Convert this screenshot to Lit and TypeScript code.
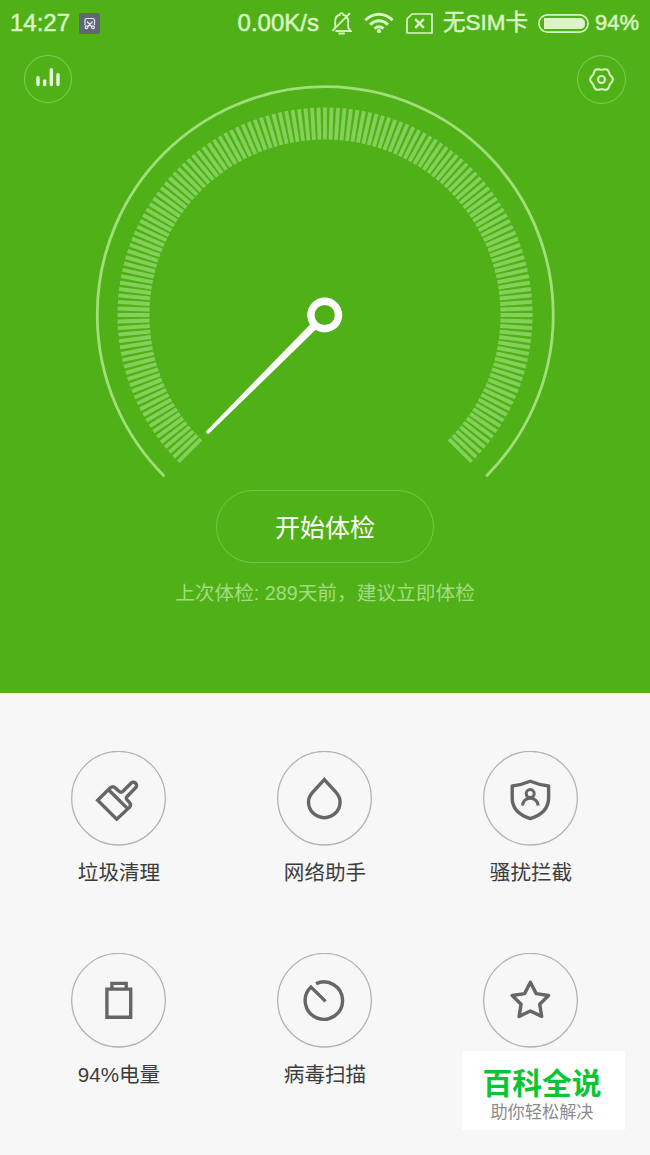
import { LitElement, html, css, svg } from "lit";
import { customElement } from "lit/decorators.js";

const CX = 235;
const CY = 235;

// 151 graduation marks, one every 1.8 degrees over a 270 degree sweep
const ticks = Array.from({ length: 151 }, (_, i) => {
  const a = ((-225 + i * 1.8) * Math.PI) / 180;
  const c = Math.cos(a);
  const s = Math.sin(a);
  const f = (n: number) => n.toFixed(2);
  return `M${f(CX + 175.5 * c)} ${f(CY + 175.5 * s)}L${f(CX + 207.5 * c)} ${f(CY + 207.5 * s)}`;
}).join("");

const gearPath =
  Array.from({ length: 72 }, (_, i) => {
    const a = (i * 5 * Math.PI) / 180;
    const r = 10.5 + 0.8 * Math.cos(6 * a);
    return `${i ? "L" : "M"}${(24.5 + r * Math.cos(a)).toFixed(2)} ${(24.5 + r * Math.sin(a)).toFixed(2)}`;
  }).join("") + "Z";

const tools = [
  {
    label: "垃圾清理",
    icon: svg`<path d="M26.7 49.3 39 37Q41.8 34.6 44.4 37L48 40.3Q50 42 52 40.2L60 32.2A3.2 3.2 0 0 1 64.6 36.8L56.3 45.2Q54.4 47.2 56.3 49.2L58.6 51.6Q60.6 54.2 58.4 56.4L45.7 68.2ZM37.5 38.8 56.6 57.6"/>`,
  },
  {
    label: "网络助手",
    icon: svg`<path d="M47.3 28.6 36 40.9C33 44.1 31.5 47.3 31.5 50.9A15.8 15.8 0 0 0 63.1 50.9C63.1 47.3 61.6 44.1 58.6 40.9Z"/>`,
  },
  {
    label: "骚扰拦截",
    icon: svg`<path stroke-linejoin="round" d="M47.3 30.2Q38 34 29.2 35V47C29.2 57 36 64 47.3 67.6C58.6 64 65.6 57 65.6 47V35Q56.6 34 47.3 30.2Z"/><g stroke-width="3"><circle cx="47.2" cy="42.6" r="4"/><path d="M39.4 54.6C40.2 49.6 43.2 47.2 47.2 47.2S54.4 49.6 55.2 54.6"/></g>`,
  },
  {
    label: "94%电量",
    icon: svg`<path d="M35.9 36.1H59.7V64.3H35.9ZM40.9 35V30.4H55.2V35"/>`,
  },
  {
    label: "病毒扫描",
    icon: svg`<path d="M39 30.6A18.7 18.7 0 1 1 34 34L48.6 48.4"/>`,
  },
  {
    label: "",
    icon: svg`<path stroke-linejoin="round" d="M47.4 29.3 53.2 40.6 65.6 42.5 56.7 51.3 58.7 63.4 47.4 58 36.1 63.4 38.1 51.3 29.2 42.5 41.6 40.6Z"/>`,
  },
];

@customElement("app-root")
export class AppRoot extends LitElement {
  static styles = css`
    :host {
      display: block;
      position: relative;
      width: 650px;
      height: 1155px;
      overflow: hidden;
      background: #f7f7f7;
      font-family: "Liberation Sans", "Noto Sans CJK SC", sans-serif;
    }
    svg {
      display: block;
      fill: none;
      flex: none;
    }
    .hero {
      height: 693px;
      background: #50b018;
      display: flex;
      flex-direction: column;
      align-items: center;
    }
    .status {
      width: 100%;
      height: 46px;
      box-sizing: border-box;
      padding: 0 11px 0 10px;
      display: flex;
      align-items: center;
      color: #d8f5c5;
      font-size: 24px;
      line-height: 48px;
      white-space: nowrap;
      -webkit-text-stroke: 0.5px #d8f5c5;
    }
    .badge {
      margin-left: 9px;
    }
    .speed {
      margin-left: auto;
    }
    .bell {
      margin-left: 12px;
    }
    .wifi {
      margin-left: 12px;
    }
    .sim {
      margin-left: 12px;
    }
    .carrier {
      margin-left: 10px;
      font-size: 22.5px;
    }
    .battery {
      margin: 0 6px 0 10px;
    }
    .percent {
      font-size: 22px;
    }
    .top {
      width: 100%;
      height: 444px;
      box-sizing: border-box;
      padding: 9px 24px 0;
      display: flex;
      justify-content: space-between;
    }
    .gauge {
      margin-top: 25px;
    }
    .start {
      box-sizing: border-box;
      width: 218px;
      height: 73px;
      border: 1.5px solid #74c946;
      border-radius: 37px;
      color: #fff;
      font-size: 25px;
      line-height: 74px;
      text-align: center;
    }
    .last {
      margin-top: 15px;
      color: #a3dc80;
      font-size: 19.7px;
      line-height: 30px;
      white-space: nowrap;
    }
    .tools {
      padding: 58px 0 0 15.5px;
      display: grid;
      grid-template-columns: repeat(3, 206px);
      grid-auto-rows: 202px;
    }
    .tool {
      display: flex;
      flex-direction: column;
      align-items: center;
      color: #3c3c3c;
      font-size: 20.6px;
      line-height: 30px;
    }
    .label {
      margin: 12px 0 0 1px;
    }
    .promo {
      position: absolute;
      left: 462px;
      top: 1051px;
      width: 163px;
      height: 79px;
      background: #fff;
      display: flex;
      flex-direction: column;
      align-items: center;
      white-space: nowrap;
    }
    .brand {
      margin: 15px 3px 0 0;
      color: #0bc634;
      font-size: 29.8px;
      font-weight: 700;
      line-height: 36px;
    }
    .slogan {
      margin: -1px 3px 0 0;
      color: #8c8c8c;
      font-size: 17.2px;
      line-height: 22px;
    }
  `;

  render() {
    return html`
      <div class="hero">
        <div class="status">
          <span>14:27</span>
          <svg class="badge" width="21" height="21" stroke="#e8e8f4" stroke-width="1.2">
            <rect width="21" height="21" rx="2.5" fill="#5d6874" stroke="none" />
            <path d="M6 12V7.5Q6 5.5 8 5.5H13.5Q15.5 5.5 15.5 7.5V12M8 8.5 13 14M13.5 8.5 8.5 14" />
            <circle cx="7.5" cy="14.3" r="1.4" />
            <circle cx="14" cy="14.3" r="1.4" />
          </svg>
          <span class="speed">0.00K/s</span>
          <svg class="bell" width="21" height="23" stroke="#d8f5c5" stroke-width="1.8">
            <path d="M4.2 16V9.5Q4.2 3.8 8.7 3Q9 1.2 10.5 1.2T12.5 3Q17.2 3.8 17.2 9.5V16L19.8 19H4.5M1.4 18.8 19 1.2M7.5 21.5H13.8" />
          </svg>
          <svg class="wifi" width="30" height="22" stroke="#d8f5c5" stroke-width="2.9">
            <path d="M1.3 8.2Q15-3.6 28.7 8.2M6 12.6Q15 5 24 12.6M10.5 16.6Q15 13 19.5 16.6" />
            <circle cx="15" cy="19.2" r="2.1" fill="#d8f5c5" stroke="none" />
          </svg>
          <svg class="sim" width="27" height="21" stroke="#d8f5c5">
            <path d="M6 1H26V20H1V6Z" stroke-width="1.7" />
            <path d="M9.2 6.2 17.8 14.8M17.8 6.2 9.2 14.8" stroke-width="2.4" />
          </svg>
          <span class="carrier">无SIM卡</span>
          <svg class="battery" width="51" height="19" stroke="#d8f5c5" stroke-width="1.6">
            <rect x="0.9" y="0.9" width="49.2" height="17.2" rx="8.6" />
            <path d="M6 4H42.5Q47 4.5 47 9.5T42.5 15H6Z" fill="#dcf3cc" stroke="none" />
          </svg>
          <span class="percent">94%</span>
        </div>
        <div class="top">
          <svg width="49" height="49">
            <circle cx="24" cy="24" r="23.5" stroke="#78ca4c" stroke-width="1.2" />
            <path
              d="M14 22.8V29.6M20.7 26V29.6M27.3 14.8V29.6M34 19.6V29.6"
              stroke="#e6fbd9"
              stroke-width="3.4"
              stroke-linecap="round"
            />
          </svg>
          <svg class="gauge" width="470" height="410">
            <path d="M74.3 396.2A228 228 0 1 1 396.2 396.2" stroke="#a0df79" stroke-width="2.8" />
            <path d=${ticks} stroke="#84d15a" stroke-width="3.8" />
            <path d="M226.2 238.2 231.8 243.8 118.8 353.7Q116 354.4 116.1 351.3Z" fill="#fff" />
            <circle cx="234.7" cy="235" r="13.8" stroke="#fff" stroke-width="7.4" fill="#50b018" />
          </svg>
          <svg width="49" height="49">
            <circle cx="24.5" cy="24.5" r="23.9" stroke="#78ca4c" stroke-width="1.1" />
            <path d=${gearPath} stroke="#d2f5ba" stroke-width="2.1" />
            <circle cx="24.5" cy="24.5" r="3.5" stroke="#d2f5ba" stroke-width="2.2" />
          </svg>
        </div>
        <div class="start">开始体检</div>
        <div class="last">上次体检: 289天前，建议立即体检</div>
      </div>
      <div class="tools">
        ${tools.map(
          (t) => html`
            <div class="tool">
              <svg width="95" height="95" stroke="#666" stroke-width="3.4">
                <circle cx="47.5" cy="47.2" r="46.8" stroke="#b2b2b2" stroke-width="1.3" />
                ${t.icon}
              </svg>
              <div class="label">${t.label}</div>
            </div>
          `
        )}
      </div>
      <div class="promo">
        <div class="brand">百科全说</div>
        <div class="slogan">助你轻松解决</div>
      </div>
    `;
  }
}
